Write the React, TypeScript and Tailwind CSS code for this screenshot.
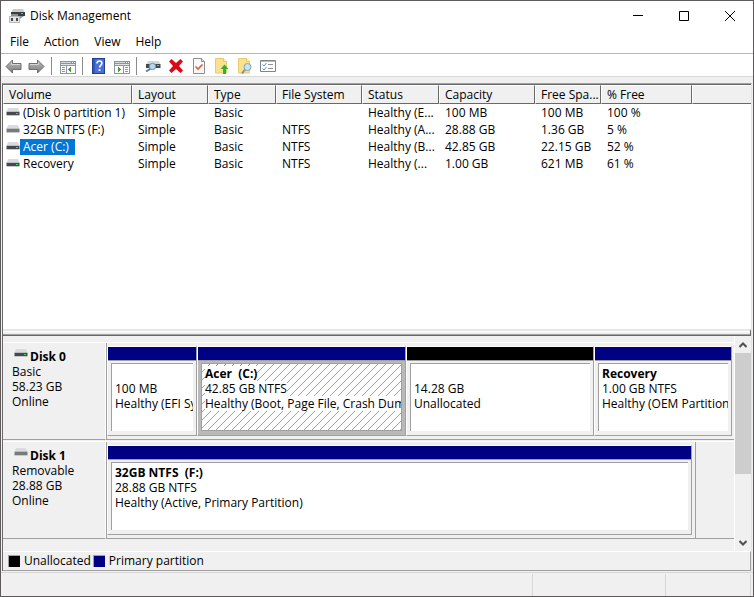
import type { ReactNode } from 'react'

const columns = ['Volume', 'Layout', 'Type', 'File System', 'Status', 'Capacity', 'Free Spa...', '% Free', '']

const volumes = [
  { name: '(Disk 0 partition 1)', fs: '', status: 'Healthy (E...', capacity: '100 MB', free: '100 MB', percent: '100 %' },
  { name: '32GB NTFS (F:)', fs: 'NTFS', status: 'Healthy (A...', capacity: '28.88 GB', free: '1.36 GB', percent: '5 %', removable: true },
  { name: 'Acer (C:)', fs: 'NTFS', status: 'Healthy (B...', capacity: '42.85 GB', free: '22.15 GB', percent: '52 %', selected: true },
  { name: 'Recovery', fs: 'NTFS', status: 'Healthy (...', capacity: '1.00 GB', free: '621 MB', percent: '61 %' },
]

function DriveIcon({ removable = false }: { removable?: boolean }) {
  return (
    <svg width="14" height="9" viewBox="0 0 14 9" className="shrink-0" aria-hidden="true">
      <path d="M2 0h10l1.500 4H.500z" fill="#d9dbde" />
      <path d="M.5 3h13v1H.500z" fill="#bcbfc2" />
      <path d="M.5 4h13v3H.500z" fill={removable ? '#77797c' : '#45494b'} />
      <path d="M.5 7h13v1H.500z" fill="#c9c9ca" />
      {!removable && <path d="M10 5h2v1h-2z" fill="#2bea3c" />}
    </svg>
  )
}

function AppIcon() {
  return (
    <svg width="16" height="15" viewBox="0 0 16 15" aria-hidden="true">
      <path d="M4 0h10l2 4H2z" fill="#c9cbce" />
      <path d="M2 3h14v4H2z" fill="#3b3f41" />
      <path d="M12 4h2v1h-2z" fill="#2bea3c" />
      <path d="M2 5h7v3H2z" fill="#8b8e91" />
      <path d="M0 7h11v7H0z" fill="#b9bbbe" />
      <path d="M1 8h9v5H1z" fill="#e4e5e7" />
      <path d="M2 9h2v3H2zM7 9h2v3H7z" fill="#4a4a4a" />
      <path d="M11 7h4l-4 3z" fill="#96999b" />
    </svg>
  )
}

function ArrowIcon({ forward = false }: { forward?: boolean }) {
  return (
    <svg width="17" height="16" viewBox="0 0 17 16" aria-hidden="true">
      <defs>
        <linearGradient id={forward ? 'fwd' : 'back'} x1="0" y1="0" x2="0" y2="1">
          <stop offset="0" stopColor="#bdbdbd" />
          <stop offset="1" stopColor="#7c7c7c" />
        </linearGradient>
      </defs>
      <path
        d={forward ? 'M16 8.500 9.500 2v3.500H1v6h8.500V15z' : 'M1 8.500 7.500 2v3.500H16v6H7.500V15z'}
        fill={forward ? 'url(#fwd)' : 'url(#back)'}
        stroke="#6e6e6e"
        strokeLinejoin="round"
      />
      <path d={forward ? 'M2 6.500h8.500V4.500' : 'M15 6.500H6.500V4.500'} fill="none" stroke="#d6d6d6" />
    </svg>
  )
}

function PaneIcon({ right = false }: { right?: boolean }) {
  return (
    <svg width="16" height="16" viewBox="0 0 16 16" shapeRendering="crispEdges" aria-hidden="true">
      <path d="M0 3h16v13H0z" fill="#8d96a0" />
      <path d="M1 4h10v1H1z" fill="#d3d9e0" />
      <path d="M12 4h1v1h-1zM14 4h1v1h-1z" fill="#f0f2f4" />
      <path d="M1 6h14v1H1z" fill="#dfe3e8" />
      {right ? (
        <>
          <path d="M1 8h8v7H1zM10 8h5v7h-5z" fill="#fff" />
          <path d="M11 9h3v1h-3zM11 11h3v1h-3zM11 13h3v1h-3z" fill="#8d96a0" />
          <path d="M4 9h1v1h1v1h1v1H6v1H5v1H4z" fill="#35a829" />
        </>
      ) : (
        <>
          <path d="M1 8h5v7H1zM7 8h8v7H7z" fill="#fff" />
          <path d="M2 9h3v1H2zM2 11h3v1H2zM2 13h3v1H2z" fill="#8d96a0" />
          <path d="M11 9h-1v1H9v1H8v1h1v1h1v1h1z" fill="#35a829" />
        </>
      )}
    </svg>
  )
}

function HelpIcon() {
  return (
    <svg width="13" height="16" viewBox="0 0 13 16" aria-hidden="true">
      <path d="M0 0h13v16H0z" fill="#1f3f94" />
      <path d="M1 1h2v14H1z" fill="#3458b8" />
      <path d="M3 1h9v14H3z" fill="#4a6fd0" />
      <path d="M5 5.500C5 3.700 6 3 7.400 3s2.500.8 2.500 2.200c0 2-2.400 2.200-2.400 4.300" fill="none" stroke="#fff" strokeWidth="1.600" />
      <path d="M6.600 11.200h1.800V13H6.600z" fill="#fff" />
    </svg>
  )
}

function RescanIcon() {
  return (
    <svg width="16" height="16" viewBox="0 0 16 16" aria-hidden="true">
      <path d="M3 3h11l1.500 4H1z" fill="#d3d5d8" />
      <path d="M1 6h14.500v4H1z" fill="#44484b" />
      <path d="M12 7h2v1h-2z" fill="#2bea3c" />
      <circle cx="7.500" cy="8.500" r="3.200" fill="#b5d6ee" stroke="#7192ab" />
      <path d="M5.200 10.800 1 13.500" stroke="#4f86ac" strokeWidth="2" />
    </svg>
  )
}

function DeleteIcon() {
  return (
    <svg width="14" height="14" viewBox="0 0 14 14" aria-hidden="true">
      <path d="M2.500 0 7 4l4.500-4L14 2.500 10 7l4 4.500-2.500 2.500L7 10l-4.500 4L0 11.500 4 7 0 2.500z" fill="#d90b16" />
    </svg>
  )
}

function PropertiesIcon() {
  return (
    <svg width="12" height="16" viewBox="0 0 12 16" aria-hidden="true">
      <path d="M.5.500h8l3 3v12H.500z" fill="#f8f8fa" stroke="#8a8e94" />
      <path d="M8.500.500v3h3" fill="#d9dce0" stroke="#8a8e94" />
      <path d="M2.500 8.500 5 11l4.500-4.500" fill="none" stroke="#ee5a24" strokeWidth="1.600" />
    </svg>
  )
}

function FolderIcon({ search = false }: { search?: boolean }) {
  return (
    <svg width="14" height="16" viewBox="0 0 14 16" aria-hidden="true">
      <path d="M.5.500h8l3 3v11.500H.500z" fill="#fbe18d" stroke="#e9cb6e" />
      <path d="M8.500.500v3h3" fill="#fff4c9" stroke="#e9cb6e" />
      {search ? (
        <>
          <path d="M7 11.500 4 15.500" stroke="#7d93a5" strokeWidth="2" />
          <circle cx="9.500" cy="9" r="3.500" fill="#c9e2f2" stroke="#84a2b8" />
        </>
      ) : (
        <path d="M9.500 6.500 13.500 11H11v5H8v-5H5.500z" fill="#2fb52b" />
      )}
    </svg>
  )
}

function ListIcon() {
  return (
    <svg width="16" height="12" viewBox="0 0 16 12" aria-hidden="true">
      <path d="M.5.500h15v11H.500z" fill="#fff" stroke="#7f858c" />
      <path d="M1 1h14v1H1z" fill="#b9bec4" />
      <path d="M2.500 4.500 4 6l2.500-3M2.500 8.500 4 10l2.500-3" fill="none" stroke="#3f9be2" />
      <path d="M8 4.500h5M8 8.500h5" stroke="#8d949b" />
    </svg>
  )
}

function ToolButton({ label, children }: { label: string; children: ReactNode }) {
  return (
    <button type="button" aria-label={label} className="flex h-5 w-[23px] items-center justify-center">
      {children}
    </button>
  )
}

function ToolDivider() {
  return <span className="mr-1 ml-[3px] h-[18px] w-px bg-[#8c8c8c]" />
}

type PartitionProps = {
  title?: string
  lines: string[]
  unallocated?: boolean
  selected?: boolean
}

function Partition({ title, lines, unallocated = false, selected = false }: PartitionProps) {
  return (
    <div className="flex min-w-0 flex-col border-t border-l border-r border-b border-t-white border-l-white border-r-[#a0a0a0] border-b-[#a0a0a0]">
      <div className={`h-[14px] border-b border-[#a0a0a0] ${unallocated ? 'bg-black' : 'bg-[#000082]'}`} />
      <div className={`flex grow p-[3px] pt-[2px] ${selected ? 'bg-[#b9b9b9]' : 'bg-[#f0f0f0]'}`}>
        <div
          className={`flex h-[68px] min-w-0 grow flex-col items-start overflow-hidden border-t border-l border-[#a0a0a0] pt-[2px] pl-[3px] leading-[15px] whitespace-pre ${
            selected
              ? 'border-r border-b bg-white bg-[linear-gradient(135deg,transparent_46%,#a0a0a0_46%,#a0a0a0_54%,transparent_54%)] bg-[length:8px_8px]'
              : 'bg-white'
          }`}
        >
          <span className="h-[15px] bg-white font-bold">{title}</span>
          {lines.map((line) => (
            <span key={line} className="max-w-full overflow-hidden bg-white">{line}</span>
          ))}
        </div>
      </div>
    </div>
  )
}

type DiskProps = {
  name: string
  kind: string
  size: string
  removable?: boolean
  children: ReactNode
}

function Disk({ name, kind, size, removable, children }: DiskProps) {
  return (
    <section className="flex h-[98px] shrink-0 border-t border-white">
      <div className="w-[103px] shrink-0 border-r border-b border-r-white border-b-[#a0a0a0] pt-[6px] pl-[9px] leading-[15px]">
        <h2 className="flex items-start gap-[2px] pl-[2px] font-bold">
          <DriveIcon removable={removable} />
          {name}
        </h2>
        <p>{kind}</p>
        <p>{size}</p>
        <p>Online</p>
      </div>
      <div className="flex min-w-0 grow border-l border-b border-[#a0a0a0]">{children}</div>
    </section>
  )
}

export default function App() {
  return (
    <div className="flex h-screen flex-col overflow-hidden border border-[#5e5a5c] bg-[#f0f0f0] font-['Open_Sans','Noto_Sans',sans-serif] text-[12px] text-black">
      <header className="flex h-[30px] shrink-0 items-center bg-white pl-2">
        <AppIcon />
        <h1 className="grow pl-[5px]">Disk Management</h1>
        <button type="button" aria-label="Minimize" className="flex h-[30px] w-[46px] items-center justify-center">
          <svg width="10" height="10"><path d="M0 4.500h10" stroke="#000" /></svg>
        </button>
        <button type="button" aria-label="Maximize" className="flex h-[30px] w-[46px] items-center justify-center">
          <svg width="10" height="10"><path d="M.5.500h9v9h-9z" fill="none" stroke="#000" /></svg>
        </button>
        <button type="button" aria-label="Close" className="flex h-[30px] w-[46px] items-center justify-center">
          <svg width="10" height="10"><path d="M0 0l10 10M10 0 0 10" stroke="#000" /></svg>
        </button>
      </header>

      <nav className="flex h-[23px] shrink-0 items-center gap-[15px] border-b border-[#b0b5bf] bg-white pl-[9px]">
        <button type="button">File</button>
        <button type="button">Action</button>
        <button type="button">View</button>
        <button type="button">Help</button>
      </nav>

      <div className="flex h-[23px] shrink-0 items-center border-b border-[#d8d8d8] bg-white pt-[2px] pl-px">
        <ToolButton label="Back"><ArrowIcon /></ToolButton>
        <ToolButton label="Forward"><ArrowIcon forward /></ToolButton>
        <ToolDivider />
        <ToolButton label="Show console tree"><PaneIcon /></ToolButton>
        <ToolDivider />
        <ToolButton label="Help"><HelpIcon /></ToolButton>
        <ToolButton label="Show action pane"><PaneIcon right /></ToolButton>
        <ToolDivider />
        <ToolButton label="Rescan disks"><RescanIcon /></ToolButton>
        <ToolButton label="Delete"><DeleteIcon /></ToolButton>
        <ToolButton label="Properties"><PropertiesIcon /></ToolButton>
        <ToolButton label="Open"><FolderIcon /></ToolButton>
        <ToolButton label="Explore"><FolderIcon search /></ToolButton>
        <ToolButton label="Settings"><ListIcon /></ToolButton>
      </div>

      <main className="mt-[6px] mr-px ml-px flex min-h-0 grow flex-col border-t border-r border-l border-t-[#a0a0a0] border-r-[#e3e3e3] border-l-[#696969]">
        <div className="min-h-0 grow overflow-hidden border-t border-[#696969] bg-white">
          <table className="w-full table-fixed border-separate border-spacing-0 text-left leading-4 whitespace-nowrap">
            <colgroup>
              <col className="w-[129px]" />
              <col className="w-[76px]" />
              <col className="w-[68px]" />
              <col className="w-[86px]" />
              <col className="w-[77px]" />
              <col className="w-[96px]" />
              <col className="w-[66px]" />
              <col className="w-[91px]" />
              <col />
            </colgroup>
            <thead>
              <tr>
                {columns.map((column) => (
                  <th
                    key={column}
                    className="h-[19px] border-t border-r border-b border-l border-t-white border-r-[#696969] border-b-[#696969] border-l-white bg-[#f0f0f0] p-0 pl-[5px] font-normal last:border-r-0"
                  >
                    {column}
                  </th>
                ))}
              </tr>
            </thead>
            <tbody>
              {volumes.map((volume) => (
                <tr key={volume.name} className="h-[17px]">
                  <td className="p-0 pl-[3px]">
                    <div className="flex items-center">
                      <DriveIcon removable={volume.removable} />
                      <span className={volume.selected ? 'bg-[#0078d7] pr-[6px] pl-[3px] text-white' : 'pl-[3px]'}>
                        {volume.name}
                      </span>
                    </div>
                  </td>
                  <td className="p-0 pl-[6px]">Simple</td>
                  <td className="p-0 pl-[6px]">Basic</td>
                  <td className="p-0 pl-[6px]">{volume.fs}</td>
                  <td className="p-0 pl-[6px]">{volume.status}</td>
                  <td className="p-0 pl-[6px]">{volume.capacity}</td>
                  <td className="p-0 pl-[6px]">{volume.free}</td>
                  <td className="p-0 pl-[6px]">{volume.percent}</td>
                  <td />
                </tr>
              ))}
            </tbody>
          </table>
        </div>

        <div className="h-[7px] shrink-0 border-t-2 border-r border-b border-t-[#e6e6e6] border-r-[#696969] border-b-[#696969] bg-[#f0f0f0]">
          <div className="h-1 border-t border-b border-t-white border-b-[#a0a0a0]" />
        </div>

        <div className="flex h-[215px] shrink-0">
          <div id="disks" className="flex min-w-0 grow flex-col gap-px pt-[6px]">
            <Disk name="Disk 0" kind="Basic" size="58.23 GB">
              <div className="grid min-w-0 grow grid-cols-[90fr_209fr_188fr_138fr] pt-[3px] pr-[2px] pb-[3px]">
                <Partition lines={['100 MB', 'Healthy (EFI Sy']} />
                <Partition selected title="Acer  (C:)" lines={['42.85 GB NTFS', 'Healthy (Boot, Page File, Crash Dump']} />
                <Partition unallocated lines={['14.28 GB', 'Unallocated']} />
                <Partition title="Recovery" lines={['1.00 GB NTFS', 'Healthy (OEM Partition']} />
              </div>
            </Disk>
            <Disk name="Disk 1" kind="Removable" size="28.88 GB" removable>
              <div className="mr-[38px] grid min-w-0 grow border-r border-[#a0a0a0] pt-[3px] pr-[3px] pb-[3px]">
                <Partition title="32GB NTFS  (F:)" lines={['28.88 GB NTFS', 'Healthy (Active, Primary Partition)']} />
              </div>
            </Disk>
          </div>
          <div className="flex w-[17px] shrink-0 flex-col border-l border-white" role="scrollbar" aria-controls="disks" aria-valuenow={0}>
            <div className="flex h-[17px] items-center justify-center">
              <svg width="8" height="6"><path d="M.5 5 4 1.500 7.500 5" fill="none" stroke="#505050" strokeWidth="2" /></svg>
            </div>
            <div className="h-[121px] bg-[#cdcdcd]" />
            <div className="grow" />
            <div className="flex h-[17px] items-center justify-center">
              <svg width="8" height="6"><path d="M.5 1 4 4.500 7.500 1" fill="none" stroke="#505050" strokeWidth="2" /></svg>
            </div>
          </div>
        </div>

        <div className="flex h-5 shrink-0 items-center border-t border-r border-b border-t-white border-r-[#a0a0a0] border-b-[#a0a0a0] pl-[5px]">
          <span className="size-3 border-t border-l border-[#a0a0a0] bg-black" />
          <span className="pr-[2px] pl-[4px]">Unallocated</span>
          <span className="size-3 border-t border-l border-[#a0a0a0] bg-[#000082]" />
          <span className="pl-[4px]">Primary partition</span>
        </div>
      </main>

      <footer className="mt-px flex h-[24px] shrink-0 border-t border-[#d7d7d7] pt-px">
        <div className="grow border-r border-[#d7d7d7]" />
        <div className="w-[133px] border-r border-[#d7d7d7]" />
        <div className="mr-[2px] w-[85px] border-r border-[#d7d7d7]" />
      </footer>
    </div>
  )
}
